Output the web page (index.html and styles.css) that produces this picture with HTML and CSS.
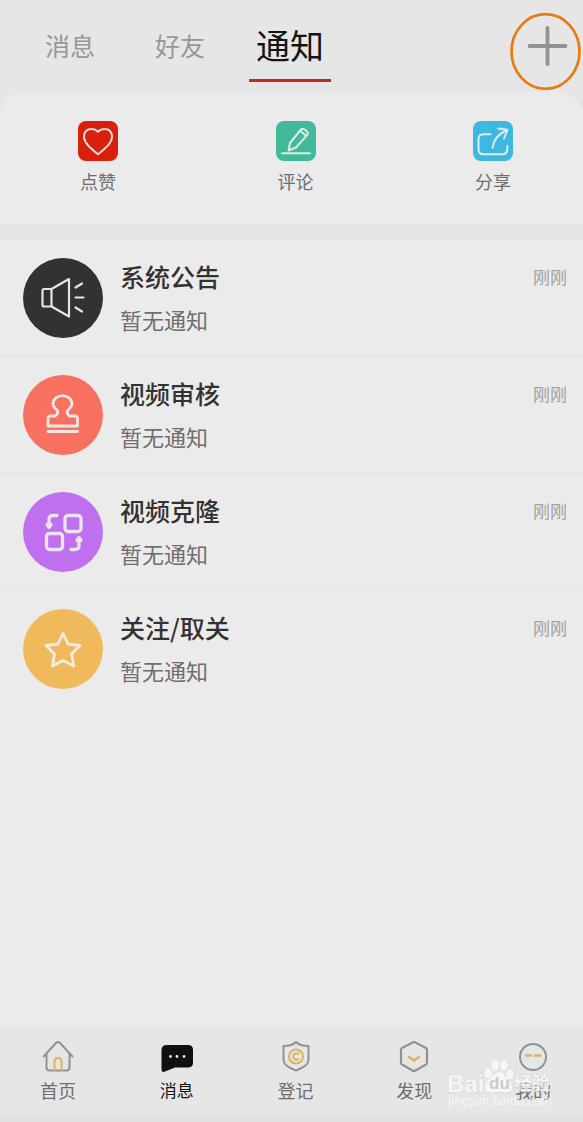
FILE: index.html
```html
<!DOCTYPE html>
<html lang="zh-CN">
<head>
<meta charset="utf-8">
<meta name="viewport" content="width=device-width, initial-scale=1">
<title>通知</title>
<link rel="stylesheet" href="styles.css">
</head>
<body>
<div class="app">
  <header class="header">
    <nav class="tabs">
      <button class="tab" type="button">消息</button>
      <button class="tab" type="button">好友</button>
      <button class="tab tab-active" type="button">通知</button>
    </nav>
    <button class="add" type="button" aria-label="添加">
      <svg width="72" height="78" viewBox="0 0 72 78" fill="none">
        <ellipse cx="36.500" cy="39.500" rx="34" ry="37.300" stroke="#e87a10" stroke-width="2.7"/>
        <path d="M20.500 34H56.500M38.500 16V52" stroke="#929292" stroke-width="3.800" stroke-linecap="round"/>
      </svg>
    </button>
  </header>

  <main class="main">
    <section class="actions">
      <button class="action" type="button">
        <svg width="40" height="40" viewBox="0 0 40 40" fill="none" stroke="#f0dedb" stroke-linecap="round" stroke-linejoin="round">
          <rect width="40" height="40" rx="8" fill="#d8200d" stroke="none"/>
          <path d="M20 33.2C14 28.500 6 22.500 6 15.500C6 11 9 8 13 8C16 8 18.300 9 20 10.800C21.700 9 24 8 27 8C31 8 34 11 34 15.500C34 22.500 26 28.500 20 33.200Z" stroke-width="2"/>
        </svg>
        <span>点赞</span>
      </button>
      <button class="action" type="button">
        <svg width="40" height="40" viewBox="0 0 40 40" fill="none" stroke="#dcece7" stroke-width="2" stroke-linecap="round" stroke-linejoin="round">
          <rect width="40" height="40" rx="8" fill="#42b99b" stroke="none"/>
          <path d="M6 32.300H34"/>
          <path d="M12.500 29.500L14 22L25 8.500Q26.500 7 28.200 8.200L31 10.500Q32.500 12 31.300 13.800L20 26.500Z"/>
          <path d="M24.500 10L29.700 14.500"/>
        </svg>
        <span>评论</span>
      </button>
      <button class="action" type="button">
        <svg width="40" height="40" viewBox="0 0 40 40" fill="none" stroke="#dcecf2" stroke-width="2" stroke-linecap="round" stroke-linejoin="round">
          <rect width="40" height="40" rx="8" fill="#3db8de" stroke="none"/>
          <path d="M17.500 13.300H10.500Q5.500 13.300 5.500 18.300V28Q5.500 33.300 10.500 33.300H29Q34.300 33.300 34.300 28V25"/>
          <path d="M19.500 27C20.500 19 25 13 34 9M25 7.500L34.500 8.800L31 17.500"/>
        </svg>
        <span>分享</span>
      </button>
    </section>

    <ul class="list">
      <li class="item">
        <span class="avatar avatar-dark">
          <svg width="80" height="80" viewBox="0 0 80 80" fill="none" stroke="#e6e6e6" stroke-width="2.200" stroke-linecap="round" stroke-linejoin="round">
            <path d="M28.500 31H21Q19.500 31 19.500 32.500V47Q19.500 48.500 21 48.500H28.500L46 58.500V21L28.500 31V48.500"/>
            <path d="M52.500 29.500L59 25.500M52.500 39.500H60.500M52.500 49.500L59 53.500"/>
          </svg>
        </span>
        <div class="text"><h2 class="title">系统公告</h2><p class="note">暂无通知</p></div>
        <time class="time">刚刚</time>
      </li>
      <li class="item">
        <span class="avatar avatar-red">
          <svg width="80" height="80" viewBox="0 0 80 80" fill="none" stroke="#f2e6e4" stroke-width="2.800" stroke-linecap="round" stroke-linejoin="round">
            <path d="M25 51V43.500Q25 41 27.500 41H32Q36 39 34 35C31 32.500 30 30.500 30 29A9 8 0 0 1 49 29C49 30.500 47.500 32.500 45 35Q43 39 46.500 41H51.500Q54.500 41 54.500 43.500V51Z"/>
            <path d="M25 56.500H54.500"/>
          </svg>
        </span>
        <div class="text"><h2 class="title">视频审核</h2><p class="note">暂无通知</p></div>
        <time class="time">刚刚</time>
      </li>
      <li class="item">
        <span class="avatar avatar-purple">
          <svg width="80" height="80" viewBox="0 0 80 80" fill="none" stroke="#ece4f0" stroke-width="3.300" stroke-linecap="round" stroke-linejoin="round">
            <rect x="42" y="23.500" width="16" height="16" rx="3"/>
            <rect x="23.500" y="41.500" width="16" height="16" rx="3"/>
            <path d="M34 23.500H30Q26 23.500 26 27.500V33"/>
            <path d="M24 32.500H28L26 35.500Z"/>
            <path d="M48 57.500H52Q56 57.500 56 53.500V48"/>
            <path d="M54 48.500H58L56 45.500Z"/>
          </svg>
        </span>
        <div class="text"><h2 class="title">视频克隆</h2><p class="note">暂无通知</p></div>
        <time class="time">刚刚</time>
      </li>
      <li class="item">
        <span class="avatar avatar-yellow">
          <svg width="80" height="80" viewBox="0 0 80 80" fill="none" stroke="#f2ece2" stroke-width="2.800" stroke-linejoin="round">
            <path d="M40 24.500L45 35L57 36.500L48.500 45L50.800 57L40 51.500L29.500 57L31.500 45L23 36.500L35 35Z"/>
          </svg>
        </span>
        <div class="text"><h2 class="title">关注/取关</h2><p class="note">暂无通知</p></div>
        <time class="time">刚刚</time>
      </li>
    </ul>
  </main>

  <footer class="footer">
    <nav class="bar">
      <a class="link" href="#">
        <svg width="32" height="32" viewBox="0 0 32 32" fill="none" stroke="#929292" stroke-width="2" stroke-linecap="round" stroke-linejoin="round">
          <path d="M1.500 16.500L14 3Q16 1 18 3L30.500 16.500M4.500 14V27.500Q4.500 30.500 7.500 30.500H24.500Q27.500 30.500 27.500 27.500V14"/>
          <path d="M12.500 30V21.500Q12.500 18 16 18T19.500 21.500V30" stroke="#d9b55e"/>
        </svg>
        <span>首页</span>
      </a>
      <a class="link link-active" href="#">
        <svg width="32" height="32" viewBox="0 0 32 32">
          <path d="M6 5H27Q32 5 32 10V22.500Q32 27.500 27 27.500H14L4 31.500Q0.500 33 0.500 29V10Q0.500 5 6 5Z" fill="#101010"/>
          <g fill="#e6e6e6"><circle cx="9.500" cy="16.500" r="1.400"/><circle cx="16" cy="16.500" r="1.400"/><circle cx="23" cy="16.500" r="1.400"/></g>
        </svg>
        <span>消息</span>
      </a>
      <a class="link" href="#">
        <svg width="32" height="32" viewBox="0 0 32 32" fill="none" stroke="#929292" stroke-width="2" stroke-linecap="round" stroke-linejoin="round">
          <path d="M16 2Q20 6 28.500 6V20Q28.500 26 16 30.500Q3.500 26 3.500 20V6Q12 6 16 2Z"/>
          <g stroke="#d9b55e"><circle cx="16" cy="16.500" r="7"/><path d="M18.500 14Q16.500 12.500 14.500 14Q12 16.500 14.500 19Q16.500 20.500 18.500 19"/></g>
        </svg>
        <span>登记</span>
      </a>
      <a class="link" href="#">
        <svg width="32" height="32" viewBox="0 0 32 32" fill="none" stroke="#929292" stroke-width="2.200" stroke-linecap="round" stroke-linejoin="round">
          <path d="M14.500 2.500Q16 1.500 17.500 2.500L28 8Q29 8.500 29 10V22.500Q29 24 28 24.500L17.500 30.500Q16 31.500 14.500 30.500L4 24.500Q3 24 3 22.500V10Q3 8.500 4 8Z"/>
          <path d="M11 17L16 20.500L21 17" stroke="#d9b55e" stroke-width="2.500"/>
        </svg>
        <span>发现</span>
      </a>
      <a class="link" href="#">
        <svg width="32" height="32" viewBox="0 0 32 32" fill="none">
          <circle cx="16" cy="17" r="13" stroke="#929292" stroke-width="2"/>
          <path d="M9 15.500H14M18 15.500H23.500" stroke="#d4b66a" stroke-width="2.400" stroke-linecap="round"/>
        </svg>
        <span>我的</span>
      </a>
    </nav>
    <svg class="watermark" width="110" height="54" viewBox="0 0 110 54" role="img" aria-label="Baidu 经验">
      <g class="wm-shape">
        <text class="wm-brand" x="1" y="34">Bai</text>
        <ellipse cx="42" cy="15" rx="4" ry="5.500"/><ellipse cx="49" cy="7" rx="4" ry="5.500"/>
        <ellipse cx="58" cy="7" rx="4" ry="5.500"/><ellipse cx="64" cy="16" rx="4" ry="5.500"/>
        <path d="M53 14C47 14 46 19 42 22Q37 27 39 31Q41 36 47 34.500Q53 33.500 58 34.500Q64 36 66 31Q67 27 63 22C59 19 59 14 53 14Z"/>
        <text class="wm-cn" x="68" y="32">经验</text>
      </g>
      <text class="wm-url" x="2" y="47">jingyan.baidu.com</text>
      <text class="wm-du" x="43" y="31">du</text>
    </svg>
  </footer>
</div>
</body>
</html>
```

FILE: styles.css
```css
* {
  box-sizing: border-box;
}

body {
  margin: 0;
  background: #e6e6e6;
  color: #6e6e6e;
  font-family: "Noto Sans CJK SC", sans-serif;
}

button {
  padding: 0;
  border: 0;
  background: none;
  color: inherit;
  font-family: inherit;
  cursor: pointer;
}

svg {
  display: block;
  flex: none;
}

.app {
  display: flex;
  flex-direction: column;
  min-height: 100vh;
}

.header {
  display: flex;
  justify-content: space-between;
  align-items: flex-start;
  height: 92px;
  padding-left: 29px;
}

.tabs {
  display: flex;
  gap: 28px;
}

.tab {
  width: 82px;
  height: 82px;
  padding-top: 11px;
  border-bottom: 3px solid transparent;
  color: #979797;
  font-size: 25px;
  line-height: 50px;
}

.tab-active {
  border-color: #bd2c1c;
  color: #141414;
  font-size: 34px;
}

.add {
  margin: 12px 2px 0 0;
}

.main {
  flex: 1;
  border-radius: 24px 24px 0 0;
  background: #ebebeb;
}

.actions {
  display: flex;
  justify-content: space-between;
  padding: 29px 70px 28px 78px;
  border-bottom: 16px solid #e5e5e5;
}

.action {
  display: flex;
  flex-direction: column;
  align-items: center;
  gap: 5px;
  width: 40px;
  font-size: 18px;
  line-height: 30px;
}

.list {
  margin: 0;
  padding: 0;
  list-style: none;
}

.item {
  display: flex;
  align-items: flex-start;
  gap: 17px;
  padding: 18px 16px 17px 23px;
  border-bottom: 2px solid #e6e6e6;
}

.item:last-child {
  border-bottom: 0;
}

.avatar {
  border-radius: 50%;
}

.avatar-dark {
  background: #323232;
}

.avatar-red {
  background: #f87060;
}

.avatar-purple {
  background: #bf70ef;
}

.avatar-yellow {
  background: #f0ba5c;
}

.text {
  flex: 1;
}

.title {
  margin: 0;
  color: #323232;
  font-size: 25px;
  font-weight: 500;
  line-height: 36px;
}

.note {
  margin: 8px 0 0;
  font-size: 22px;
  line-height: 34px;
}

.time {
  color: #a2a2a2;
  font-size: 17px;
  line-height: 38px;
}

.footer {
  position: relative;
  border-bottom: 7px solid #e0e0e0;
  background: #e6e6e6;
}

.bar {
  display: flex;
  justify-content: space-between;
  padding: 12px 31px 10px 39px;
}

.link {
  display: flex;
  flex-direction: column;
  align-items: center;
  gap: 3px;
  width: 38px;
  color: #6e6e6e;
  font-size: 18px;
  line-height: 30px;
  text-decoration: none;
  white-space: nowrap;
}

.link svg {
  overflow: visible;
}

.link-active {
  color: #141414;
  font-size: 17px;
}

.watermark {
  position: absolute;
  right: 27px;
  bottom: 3px;
  overflow: visible;
  opacity: 0.8;
  pointer-events: none;
}

.wm-shape {
  fill: #fbfbfb;
  stroke: #cfcfcf;
  stroke-width: 1px;
  paint-order: stroke;
}

.wm-brand {
  font: bold 24px "Liberation Sans", sans-serif;
}

.wm-cn {
  font: bold 18px "Noto Sans CJK SC", sans-serif;
}

.wm-url {
  fill: #fbfbfb;
  font: 12px "Noto Sans", sans-serif;
}

.wm-du {
  fill: #c4c4c4;
  font: bold 17px "Liberation Sans", sans-serif;
}
```
